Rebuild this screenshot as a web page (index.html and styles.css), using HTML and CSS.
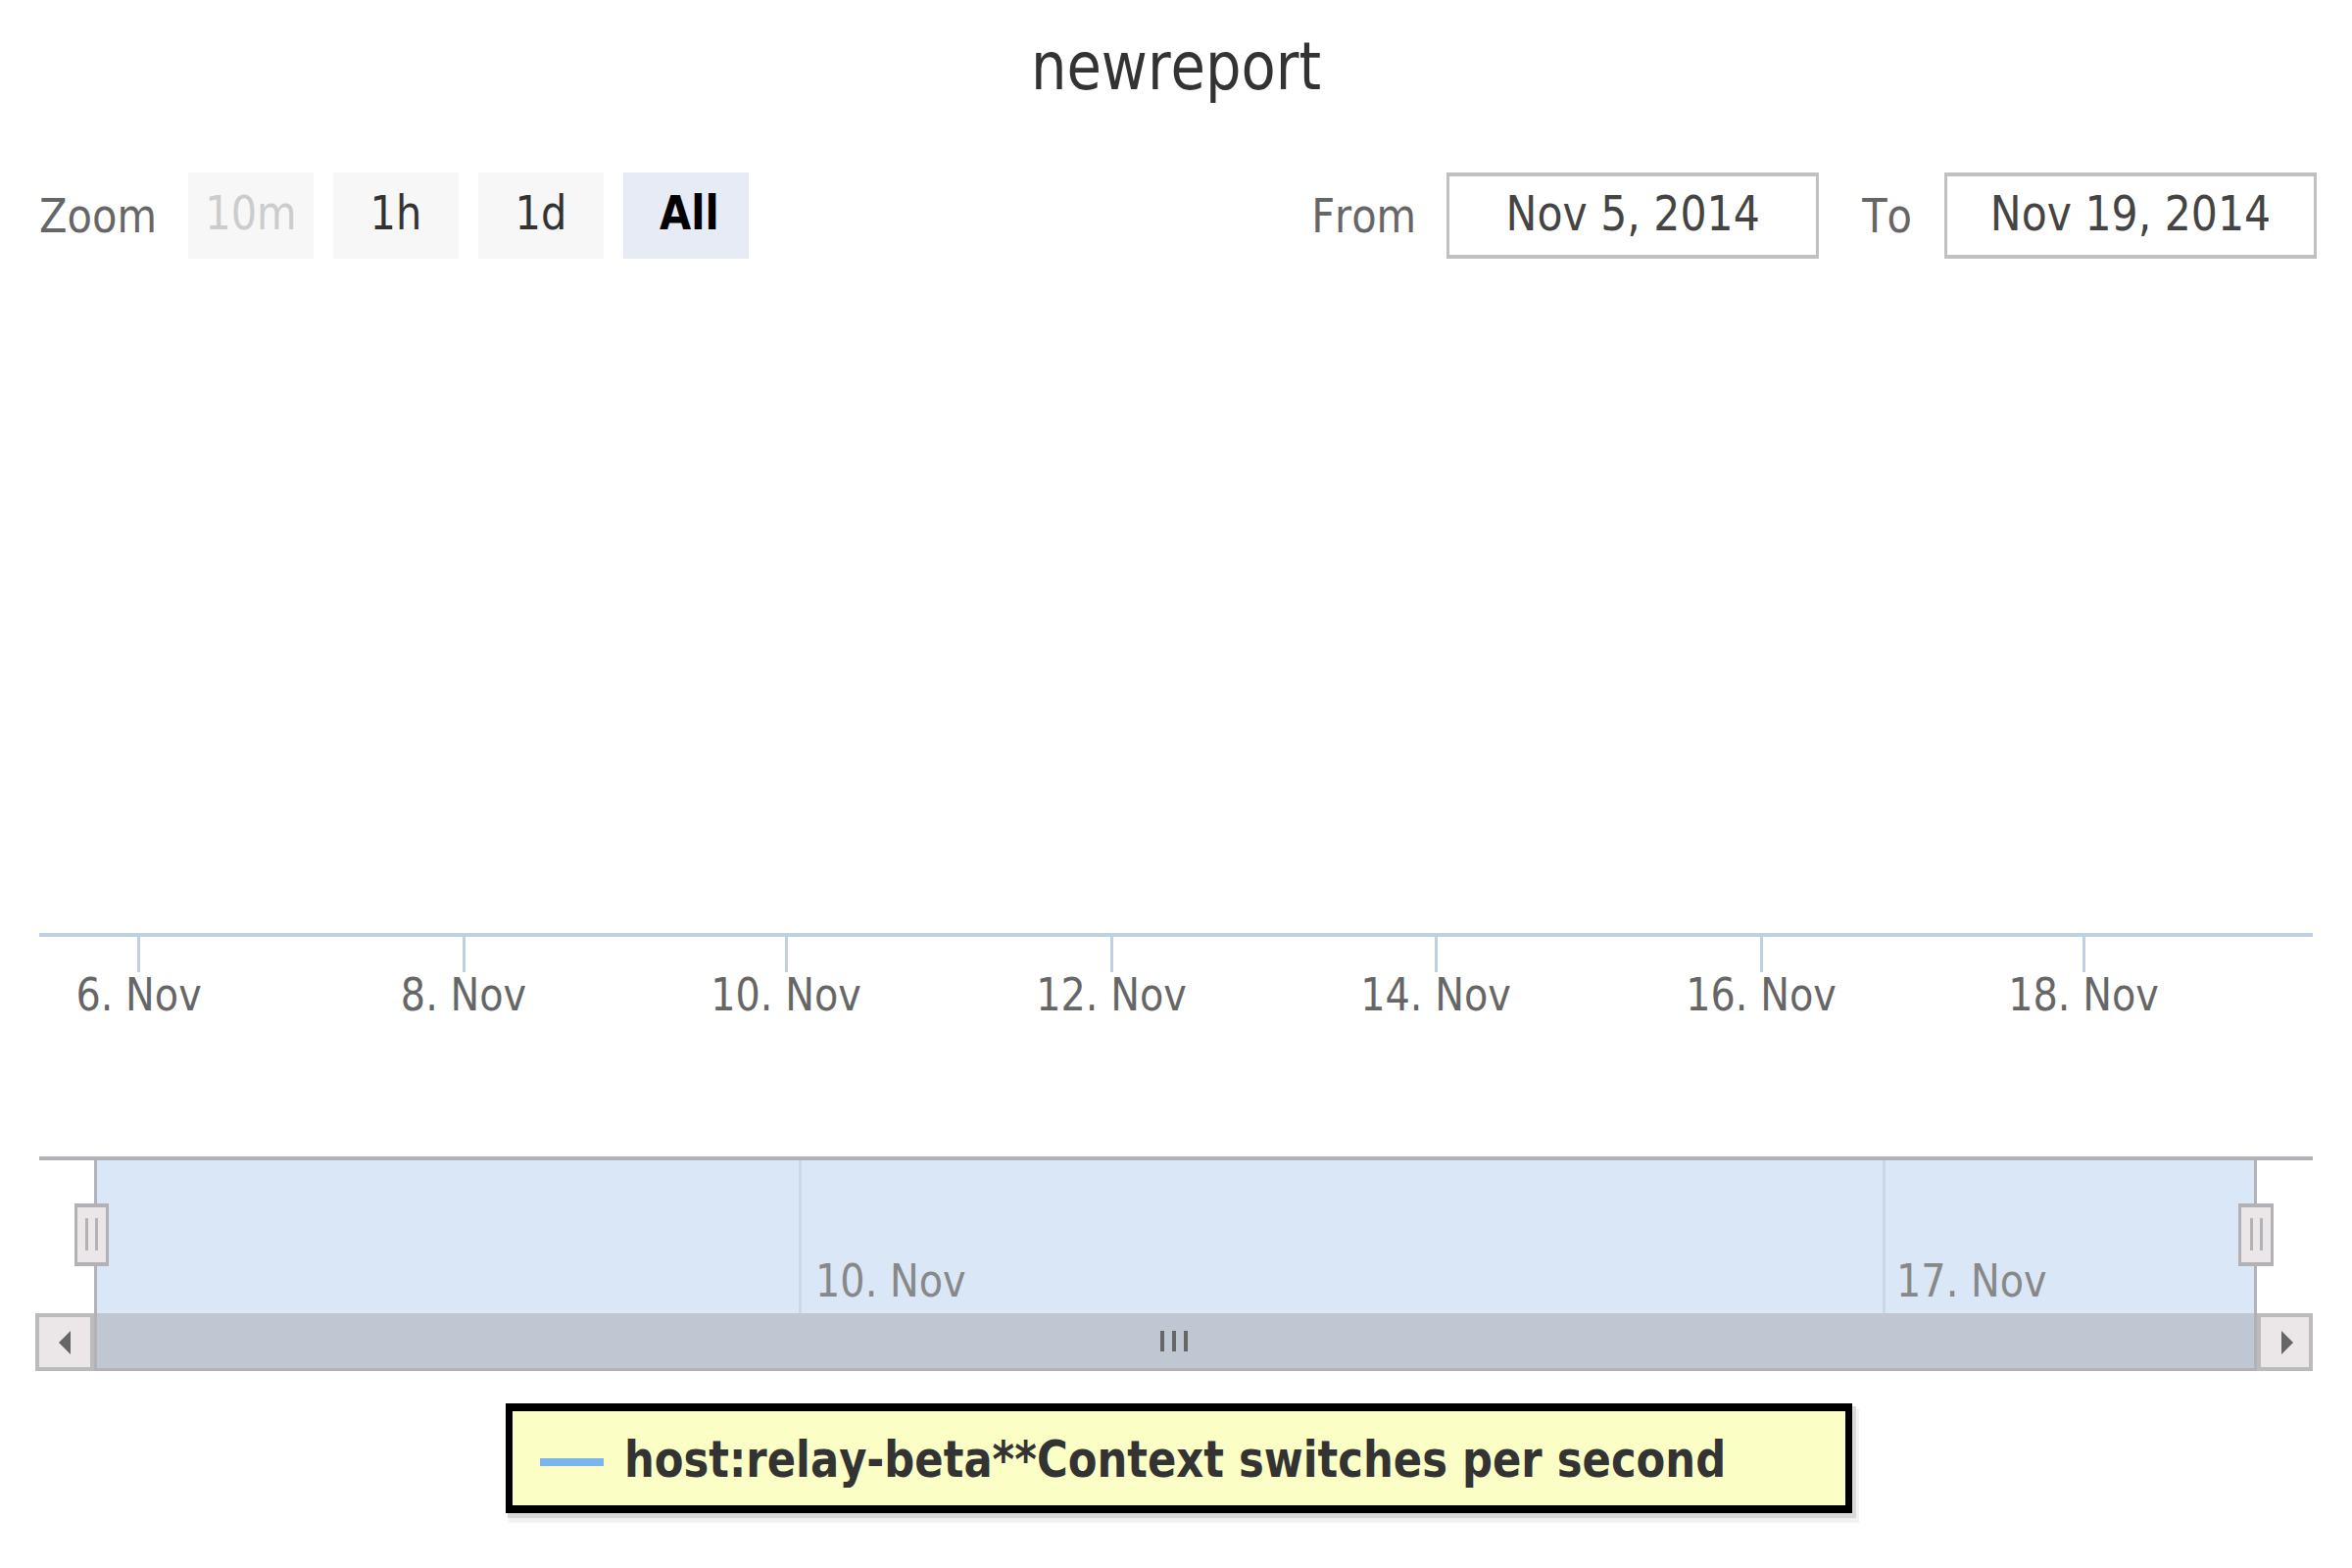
FILE: index.html
```html
<!DOCTYPE html>
<html>
<head>
<meta charset="utf-8">
<title>newreport</title>
<link rel="stylesheet" href="styles.css">
</head>
<body>
<div class="chart">
  <div class="title"><div class="t">newreport</div></div>

  <div class="rs">
    <div class="rs-label t">Zoom</div>
    <div class="btn first dis"><div class="t">10m</div></div>
    <div class="btn"><div class="t">1h</div></div>
    <div class="btn"><div class="t">1d</div></div>
    <div class="btn sel"><div class="t">All</div></div>
    <div class="rs-right">
      <div class="rs-label t lbl-from">From</div>
      <div class="datebox box-from"><div class="t">Nov 5, 2014</div></div>
      <div class="rs-label t lbl-to">To</div>
      <div class="datebox box-to"><div class="t">Nov 19, 2014</div></div>
    </div>
  </div>

  <div class="plot"></div>

  <div class="xaxis">
    <div class="axis-line"></div>
    <div class="tick" style="left:100.1px"></div>
    <div class="tick" style="left:431.5px"></div>
    <div class="tick" style="left:760.5px"></div>
    <div class="tick" style="left:1092.5px"></div>
    <div class="tick" style="left:1423.5px"></div>
    <div class="tick" style="left:1755.5px"></div>
    <div class="tick" style="left:2084.5px"></div>
    <div class="xlabel t" style="left:101.6px">6. Nov</div>
    <div class="xlabel t" style="left:433px">8. Nov</div>
    <div class="xlabel t" style="left:762px">10. Nov</div>
    <div class="xlabel t" style="left:1094px">12. Nov</div>
    <div class="xlabel t" style="left:1425px">14. Nov</div>
    <div class="xlabel t" style="left:1757px">16. Nov</div>
    <div class="xlabel t" style="left:2086px">18. Nov</div>
  </div>

  <div class="nav">
    <div class="nav-body">
      <div class="nav-pad-l"></div>
      <div class="nav-mask">
        <div class="ngrid" style="left:716px"></div>
        <div class="ngrid" style="left:1822px"></div>
        <div class="nlabel t" style="left:733px">10. Nov</div>
        <div class="nlabel t" style="left:1836px">17. Nov</div>
      </div>
      <div class="nav-pad-r"></div>
    </div>
    <div class="handle h-left"><i></i><i></i></div>
    <div class="handle h-right"><i></i><i></i></div>
    <div class="scroll">
      <div class="sb-btn"><span class="arrow-l"></span></div>
      <div class="sb-thumb"><i></i><i></i><i></i></div>
      <div class="sb-btn r"><span class="arrow-r"></span></div>
    </div>
  </div>

  <div class="legend">
    <div class="lsym"></div>
    <div class="ltext t">host:relay-beta**Context switches per second</div>
  </div>
</div>
</body>
</html>
```

FILE: styles.css
```css
* { box-sizing: border-box; margin: 0; padding: 0; }
html, body { width: 2400px; height: 1600px; background: #fff; overflow: hidden; }
body { font-family: "DejaVu Sans", Verdana, sans-serif; font-kerning: none; }

.chart { width: 2400px; height: 1600px; display: flex; flex-direction: column; }

/* vertically stretched text (the chart is rendered with a taller vertical scale) */
.t { line-height: 1; transform: scaleY(1.17); transform-origin: 50% 84.6%; white-space: nowrap; }

.title { height: 101px; padding-top: 43px; font-size: 57.6px; color: #333; text-align: center; }

/* range selector */
.rs { display: flex; align-items: flex-start; height: 88px; margin-top: 75px; padding: 0 36px 0 40px; font-size: 41.6px; }
.rs-label { color: #666; margin-top: 25.5px; }
.btn { width: 128px; height: 88px; background: #f7f7f7; display: flex; justify-content: center; padding-top: 25.5px; color: #333; margin-left: 20px; }
.btn.first { margin-left: 32px; }
.btn.dis { color: #cccccc; }
.btn.sel { background: #e6ebf5; color: #000; font-weight: bold; }
.btn.sel .t { margin-left: 7px; }
.rs-right { margin-left: auto; display: flex; align-items: flex-start; }
.datebox { width: 380px; height: 88px; border: solid #c0c0c0; border-width: 4px 3px; display: flex; justify-content: center; padding-top: 21px; color: #444; font-size: 42.6px; }
.box-from { margin-left: 31px; }
.lbl-to { margin-left: 44px; }
.box-to { margin-left: 33px; }

.plot { height: 688px; }

/* x axis */
.xaxis { position: relative; height: 228px; margin: 0 40px; }
.axis-line { height: 4px; background: #c0d0e0; }
.tick { position: absolute; top: 4px; width: 3px; height: 36px; background: #c0d0e0; }
.xlabel { position: absolute; top: 46px; width: 240px; margin-left: -120px; text-align: center; font-size: 39.8px; color: #666; }

/* navigator */
.nav { position: relative; margin: 0 40px; border-top: 4px solid #b2b1b6; }
.nav-body { display: flex; height: 156px; }
.nav-pad-l { width: 56px; }
.nav-pad-r { width: 57px; }
.nav-mask { flex: 1; position: relative; background: #d9e7f7; border-left: 3px solid #b2b1b6; border-right: 3px solid #b2b1b6; }
.ngrid { position: absolute; top: 0; bottom: 0; width: 3px; background: #cad9ea; }
.nlabel { position: absolute; top: 106.3px; font-size: 39.8px; color: #888; }

.handle { position: absolute; top: 44px; width: 35px; height: 64px; background: #ebe7e8; border: solid #b2b1b6; border-width: 4px 3px; display: flex; justify-content: center; gap: 7px; padding-top: 11px; }
.handle i { display: block; width: 3px; height: 33px; background: #b2b1b6; }
.h-left { left: 36px; }
.h-right { left: 2244px; width: 36px; }

.scroll { display: flex; height: 59px; margin-left: -4px; }
.sb-btn { width: 60px; background: #ebe7e8; border: 4px solid #bbbbbb; display: flex; align-items: center; justify-content: center; }
.sb-btn.r { width: 57px; }
.sb-thumb { flex: 1; background: #bfc7d2; border: solid #b2b1b6; border-width: 0 3px 3px; display: flex; justify-content: center; align-items: center; gap: 8px; padding-top: 1px; padding-right: 4px; }
.sb-thumb i { display: block; width: 4px; height: 21px; background: #666; }
.arrow-l { width: 0; height: 0; border-top: 12px solid transparent; border-bottom: 12px solid transparent; border-right: 12px solid #666; }
.arrow-r { width: 0; height: 0; border-top: 12px solid transparent; border-bottom: 12px solid transparent; border-left: 12px solid #666; margin-left: 5px; }

/* legend */
.legend { margin-top: 33px; margin-left: 516px; width: 1374px; height: 112px; border: solid #000; border-width: 8px 7px; background: #fcffc5; box-shadow: 3px 4px 0 1px #d9d9d9, 5px 8px 0 2px #f2f2f2; display: flex; align-items: flex-start; padding-left: 28px; }
.lsym { width: 65px; height: 8px; background: #7cb5ec; margin-top: 48px; }
.ltext { margin-left: 21px; margin-top: 31.4px; font-size: 43.3px; font-weight: bold; color: #333; }
```
